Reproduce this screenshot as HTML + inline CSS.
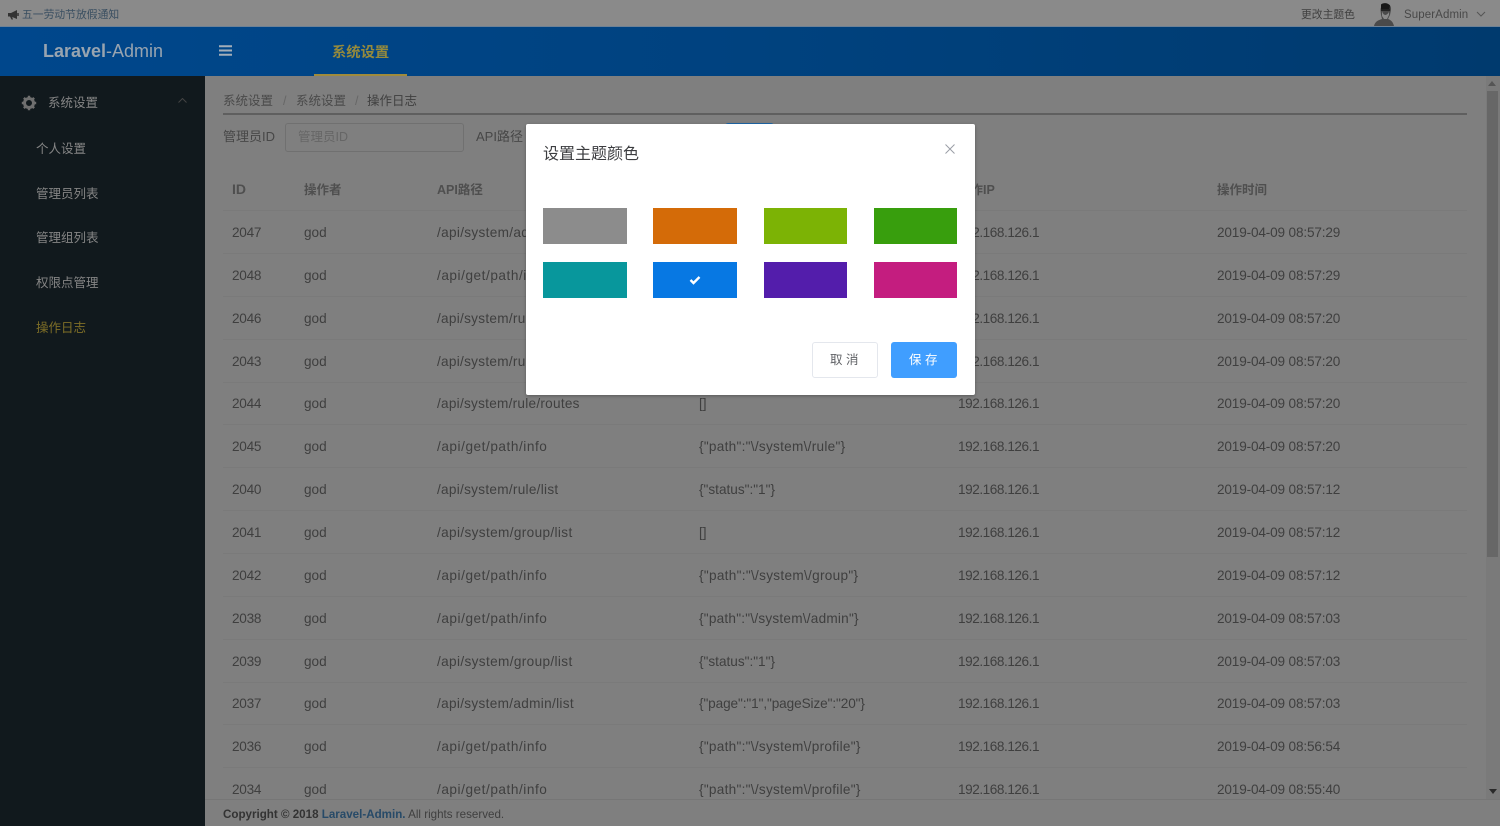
<!DOCTYPE html>
<html lang="zh"><head><meta charset="utf-8"><title>操作日志</title>
<style>
html,body{margin:0;padding:0;width:1500px;height:826px;overflow:hidden;background:#7f7f7f}
body{font-family:"Liberation Sans","Noto Sans CJK SC",sans-serif;font-size:13px;color:#3c3c3c;position:relative;filter:blur(.3px)}
.a{position:absolute;white-space:nowrap}
.c{position:absolute;white-space:nowrap;line-height:20px;font-size:13.6px;color:#3f3f3f}
.i{left:232px;letter-spacing:-.25px}.g{left:304px}.p{left:437px}.q{left:699px}
.ip{left:958px;letter-spacing:-.45px}.t{left:1217px;letter-spacing:-.16px}
.r1{letter-spacing:.26px}.r2{letter-spacing:.55px}.r3{letter-spacing:.28px}.r4{letter-spacing:.36px}.r5{letter-spacing:.32px}
.h{position:absolute;white-space:nowrap;line-height:20px;font-size:12.5px;font-weight:bold;color:#4f4f4f}
.l{position:absolute;left:223px;width:1244px;height:1px;background:#7a7a7a}
.m{position:absolute;left:36px;font-size:12.5px;line-height:20px;color:#858585;white-space:nowrap}
.s{position:absolute;width:83.500px;height:36px}
</style></head><body>

<div class="a" style="left:0;top:0;width:1500px;height:27px;background:#8a8a8a"></div>
<svg class="a" style="left:8px;top:10px" width="12" height="10" viewBox="0 0 12 10"><path d="M0 3h3l6-3v9L3 6.500H0z" fill="#333"/><path d="M2 6.500h2l1 3H3.500z" fill="#333"/><path d="M10 3v3" stroke="#333" stroke-width="1.500"/></svg>
<div class="a" style="left:22px;top:7px;line-height:16px;font-size:10.8px;color:#3a4f61">五一劳动节放假通知</div>
<div class="a" style="left:1301px;top:7px;line-height:16px;font-size:10.8px;color:#3f3f3f">更改主题色</div>
<svg class="a" style="left:1372px;top:2px" width="24" height="24" viewBox="0 0 24 24"><path d="M2 24c1-5 5-6 8-7l-1-4-.5-5c0-4 3-6 6-6 3 0 5 2 4.500 6l-1 5-2 4c3 1 5 3 6 7z" fill="#4a4a4a"/><path d="M10 9c1 4 4 6 7 1v3l-2 4h-3l-2-3z" fill="#8a8a8a"/><path d="M9 8h9" stroke="#181818" stroke-width="1.500"/><path d="M9 2.500c2-2 7-2 9 1l-.5 3.500H9z" fill="#181818"/></svg>
<div class="a" style="left:1404px;top:7px;line-height:16px;font-size:11.5px;letter-spacing:.1px;color:#484848">SuperAdmin</div>
<svg class="a" style="left:1476px;top:11px" width="10" height="6" viewBox="0 0 10 6"><path d="M1 1l4 4 4-4" fill="none" stroke="#555" stroke-width="1"/></svg>

<div class="a" style="left:0;top:27px;width:1500px;height:49px;background:linear-gradient(90deg,#00478c,#00427f 50%,#003a6e)"></div>
<div class="a" style="left:0;top:26px;width:1500px;height:1px;background:#6e8296"></div>
<div class="a" style="left:43px;top:39px;line-height:24px;font-size:18px;color:#98a4b0;font-weight:bold">Laravel<span style="font-weight:normal">-Admin</span></div>
<svg class="a" style="left:219px;top:45px" width="13" height="11" viewBox="0 0 13 11"><path d="M0 1.200h13M0 5.500h13M0 9.800h13" stroke="#a3aeb9" stroke-width="2"/></svg>
<div class="a" style="left:332px;top:43px;line-height:20px;font-size:14.300px;font-weight:bold;color:#958a3c">系统设置</div>
<div class="a" style="left:314px;top:74px;width:93px;height:2px;background:#a08b3c"></div>

<div class="a" style="left:0;top:76px;width:205px;height:750px;background:#11191d"></div>
<svg class="a" style="left:21px;top:95px" width="16" height="16" viewBox="0 0 16 16"><circle cx="8" cy="8" r="4.500" fill="none" stroke="#6f6f6f" stroke-width="3"/><path d="M8 .8v3M8 12.200v3M.8 8h3M12.200 8h3M2.900 2.900l2.100 2.100M11 11l2.100 2.100M2.900 13.100L5 11M11 5l2.100-2.100" stroke="#6f6f6f" stroke-width="2.400"/></svg>
<div class="m" style="left:48px;top:92.500px">系统设置</div>
<svg class="a" style="left:178px;top:98px" width="9" height="5" viewBox="0 0 9 5"><path d="M.5 4.500l4-4 4 4" fill="none" stroke="#444" stroke-width="1"/></svg>
<div class="m" style="top:139px">个人设置</div>
<div class="m" style="top:183.500px">管理员列表</div>
<div class="m" style="top:228px">管理组列表</div>
<div class="m" style="top:273px">权限点管理</div>
<div class="m" style="top:317.500px;color:#7f6f27">操作日志</div>

<div class="a" style="left:223px;top:90.500px;line-height:20px;font-size:12.5px;color:#4a4a4a">系统设置</div>
<div class="a" style="left:283px;top:90.500px;line-height:20px;font-size:12.5px;color:#666">/</div>
<div class="a" style="left:296px;top:90.500px;line-height:20px;font-size:12.5px;color:#4a4a4a">系统设置</div>
<div class="a" style="left:355px;top:90.500px;line-height:20px;font-size:12.5px;color:#666">/</div>
<div class="a" style="left:367px;top:90.500px;line-height:20px;font-size:12.5px;color:#3f3f3f">操作日志</div>
<div class="a" style="left:223px;top:113px;width:1244px;height:2px;background:#5f5f5f"></div>

<div class="a" style="left:223px;top:127px;line-height:20px;font-size:13px;color:#474747">管理员ID</div>
<div class="a" style="left:285px;top:123px;width:177px;height:27px;border:1px solid #707070;border-radius:3px"></div>
<div class="a" style="left:298px;top:127px;line-height:20px;font-size:12.5px;color:#666">管理员ID</div>
<div class="a" style="left:476px;top:127px;line-height:20px;font-size:13px;color:#474747">API路径</div>
<div class="a" style="left:725px;top:123px;width:49px;height:27px;background:#1e67a8;border-radius:3px"></div>

<div class="h" style="left:232px;top:179px;font-size:14px">ID</div><div class="h" style="left:304px;top:179.500px">操作者</div><div class="h" style="left:437px;top:179.500px">API路径</div><div class="h" style="left:958px;top:179.500px">操作IP</div><div class="h" style="left:1217px;top:179.500px">操作时间</div>

<div class="l" style="top:210px"></div><div class="l" style="top:253px"></div><div class="l" style="top:296px"></div><div class="l" style="top:339px"></div><div class="l" style="top:382px"></div><div class="l" style="top:424px"></div><div class="l" style="top:467px"></div><div class="l" style="top:510px"></div><div class="l" style="top:553px"></div><div class="l" style="top:596px"></div><div class="l" style="top:639px"></div><div class="l" style="top:682px"></div><div class="l" style="top:724px"></div><div class="l" style="top:767px"></div>

<div class="c i" style="top:222.500px">2047</div><div class="c g" style="top:222.500px">god</div><div class="c p r5" style="top:222.500px">/api/system/admin/list</div><div class="c ip" style="top:222.500px">192.168.126.1</div><div class="c t" style="top:222.500px">2019-04-09 08:57:29</div>
<div class="c i" style="top:265.500px">2048</div><div class="c g" style="top:265.500px">god</div><div class="c p r2" style="top:265.500px">/api/get/path/info</div><div class="c ip" style="top:265.500px">192.168.126.1</div><div class="c t" style="top:265.500px">2019-04-09 08:57:29</div>
<div class="c i" style="top:308.500px">2046</div><div class="c g" style="top:308.500px">god</div><div class="c p r3" style="top:308.500px">/api/system/rule/list</div><div class="c ip" style="top:308.500px">192.168.126.1</div><div class="c t" style="top:308.500px">2019-04-09 08:57:20</div>
<div class="c i" style="top:351.500px">2043</div><div class="c g" style="top:351.500px">god</div><div class="c p r3" style="top:351.500px">/api/system/rule/list</div><div class="c ip" style="top:351.500px">192.168.126.1</div><div class="c t" style="top:351.500px">2019-04-09 08:57:20</div>
<div class="c i" style="top:394px">2044</div><div class="c g" style="top:394px">god</div><div class="c p r1" style="top:394px">/api/system/rule/routes</div><div class="c q" style="top:394px">[]</div><div class="c ip" style="top:394px">192.168.126.1</div><div class="c t" style="top:394px">2019-04-09 08:57:20</div>
<div class="c i" style="top:437px">2045</div><div class="c g" style="top:437px">god</div><div class="c p r2" style="top:437px">/api/get/path/info</div><div class="c q" style="top:437px;letter-spacing:.28px">{"path":"\/system\/rule"}</div><div class="c ip" style="top:437px">192.168.126.1</div><div class="c t" style="top:437px">2019-04-09 08:57:20</div>
<div class="c i" style="top:480px">2040</div><div class="c g" style="top:480px">god</div><div class="c p r3" style="top:480px">/api/system/rule/list</div><div class="c q" style="top:480px">{"status":"1"}</div><div class="c ip" style="top:480px">192.168.126.1</div><div class="c t" style="top:480px">2019-04-09 08:57:12</div>
<div class="c i" style="top:522.500px">2041</div><div class="c g" style="top:522.500px">god</div><div class="c p r4" style="top:522.500px">/api/system/group/list</div><div class="c q" style="top:522.500px">[]</div><div class="c ip" style="top:522.500px">192.168.126.1</div><div class="c t" style="top:522.500px">2019-04-09 08:57:12</div>
<div class="c i" style="top:565.500px">2042</div><div class="c g" style="top:565.500px">god</div><div class="c p r2" style="top:565.500px">/api/get/path/info</div><div class="c q" style="top:565.500px;letter-spacing:.3px">{"path":"\/system\/group"}</div><div class="c ip" style="top:565.500px">192.168.126.1</div><div class="c t" style="top:565.500px">2019-04-09 08:57:12</div>
<div class="c i" style="top:608.500px">2038</div><div class="c g" style="top:608.500px">god</div><div class="c p r2" style="top:608.500px">/api/get/path/info</div><div class="c q" style="top:608.500px;letter-spacing:.23px">{"path":"\/system\/admin"}</div><div class="c ip" style="top:608.500px">192.168.126.1</div><div class="c t" style="top:608.500px">2019-04-09 08:57:03</div>
<div class="c i" style="top:651.500px">2039</div><div class="c g" style="top:651.500px">god</div><div class="c p r4" style="top:651.500px">/api/system/group/list</div><div class="c q" style="top:651.500px">{"status":"1"}</div><div class="c ip" style="top:651.500px">192.168.126.1</div><div class="c t" style="top:651.500px">2019-04-09 08:57:03</div>
<div class="c i" style="top:694px">2037</div><div class="c g" style="top:694px">god</div><div class="c p r5" style="top:694px">/api/system/admin/list</div><div class="c q" style="top:694px;letter-spacing:-.1px">{"page":"1","pageSize":"20"}</div><div class="c ip" style="top:694px">192.168.126.1</div><div class="c t" style="top:694px">2019-04-09 08:57:03</div>
<div class="c i" style="top:737px">2036</div><div class="c g" style="top:737px">god</div><div class="c p r2" style="top:737px">/api/get/path/info</div><div class="c q" style="top:737px;letter-spacing:.28px">{"path":"\/system\/profile"}</div><div class="c ip" style="top:737px">192.168.126.1</div><div class="c t" style="top:737px">2019-04-09 08:56:54</div>
<div class="c i" style="top:779.500px">2034</div><div class="c g" style="top:779.500px">god</div><div class="c p r2" style="top:779.500px">/api/get/path/info</div><div class="c q" style="top:779.500px;letter-spacing:.28px">{"path":"\/system\/profile"}</div><div class="c ip" style="top:779.500px">192.168.126.1</div><div class="c t" style="top:779.500px">2019-04-09 08:55:40</div>

<div class="a" style="left:1486px;top:76px;width:14px;height:723px;background:#7a7a7a"></div>
<div class="a" style="left:1487px;top:91px;width:11px;height:466px;background:#676767"></div>
<svg class="a" style="left:1488px;top:81px" width="8" height="5" viewBox="0 0 8 5"><path d="M4 0l4 5H0z" fill="#555"/></svg>
<svg class="a" style="left:1489px;top:789px" width="8" height="5" viewBox="0 0 8 5"><path d="M0 0h8L4 5z" fill="#2a2a2a"/></svg>

<div class="a" style="left:205px;top:799px;width:1295px;height:27px;background:#7f7f7f;border-top:1px solid #767676;box-sizing:border-box"></div>
<div class="a" style="left:223px;top:807px;line-height:16px;font-size:11.6px;color:#333"><b>Copyright © 2018 <span style="color:#274a68">Laravel-Admin.</span></b> <span style="color:#3f3f3f">All rights reserved.</span></div>

<div class="a" style="left:525.500px;top:124px;width:449px;height:271px;background:#fff;border-radius:2px;box-shadow:0 1px 3px rgba(0,0,0,.3)"></div>
<div class="a" style="left:543px;top:144px;line-height:22px;font-size:16px;color:#3c3d40">设置主题颜色</div>
<svg class="a" style="left:945px;top:144px" width="10" height="10" viewBox="0 0 10 10"><path d="M.5.5l9 9M9.500.5l-9 9" stroke="#9a9ea6" stroke-width="1"/></svg>
<div class="s" style="left:543px;top:208px;background:#8c8c8c"></div>
<div class="s" style="left:653px;top:208px;background:#d46b08"></div>
<div class="s" style="left:764px;top:208px;width:83px;background:#7cb305"></div>
<div class="s" style="left:874px;top:208px;width:83px;background:#389e0d"></div>
<div class="s" style="left:543px;top:262px;height:35.500px;background:#08979c"></div>
<div class="s" style="left:653px;top:262px;height:35.500px;background:#0778e3"></div>
<div class="s" style="left:764px;top:262px;height:35.500px;width:83px;background:#531dab"></div>
<div class="s" style="left:874px;top:262px;height:35.500px;width:83px;background:#c41d7f"></div>
<svg class="a" style="left:689px;top:274.500px" width="12" height="10" viewBox="0 0 12 10"><path d="M1.500 5l3 3 6-6" fill="none" stroke="#fff" stroke-width="2.400"/></svg>
<div class="a" style="left:812px;top:342px;width:64px;height:34px;border:1px solid #e4e7ed;border-radius:3px;text-align:center;line-height:34px;font-size:12.5px;letter-spacing:3.500px;color:#606266;text-indent:2px">取消</div>
<div class="a" style="left:891px;top:342px;width:66px;height:36px;background:#409eff;border-radius:3px;text-align:center;line-height:36px;font-size:12.5px;letter-spacing:3.500px;color:#fff;text-indent:2px">保存</div>
</body></html>
